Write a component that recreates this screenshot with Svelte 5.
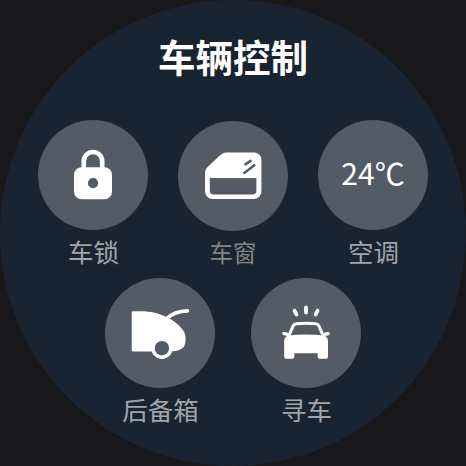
<script>
  const rows = [
    [
      { id: 'lock', label: '车锁' },
      { id: 'window', label: '车窗', dim: true },
      { id: 'climate', label: '空调', value: '24℃' }
    ],
    [
      { id: 'trunk', label: '后备箱' },
      { id: 'find', label: '寻车' }
    ]
  ];
</script>

<main class="watch">
  <section class="face">
    <h1>车辆控制</h1>
    {#each rows as row, i}
      <div class="row" class:lower={i === 1}>
        {#each row as item}
          <div class="control" class:dim={item.dim}>
            <div class="disc">
              {#if item.value}
                <span class="value">{item.value}</span>
              {:else}
                <svg viewBox="0 0 110 110" width="110" height="110">
                  {#if item.id === 'lock'}
                    <path class="line" stroke-width="4.6" d="M45.8 50V41.2a9.2 9.2 0 0 1 18.4 0V50" />
                    <rect class="solid" x="36" y="47.3" width="38" height="32" rx="7.5" />
                    <circle class="hole" cx="55" cy="63.2" r="5.1" />
                  {:else if item.id === 'window'}
                    <path class="solid" d="M47.5 31.4H76a7.4 7.4 0 0 1 7.4 7.4V70.5a7.5 7.5 0 0 1-7.5 7.5H34.5A7.5 7.5 0 0 1 27 70.5V52q0-4 3.2-6.6L41 35.3Q44.5 31.4 48.5 31.4Z" />
                    <path class="hole" d="M31.8 57H78.4V69.5q0 4-4 4H35.800q-4 0-4-4Z" />
                    <path class="cut" stroke-width="2.5" d="M67.4 43.4L72.5 39.9M66.3 51.9L76.4 44.3" />
                  {:else if item.id === 'trunk'}
                    <path class="solid" d="M28 33.3H36C46 33.3 54 35.5 60.5 38.6C68 42 74 46.5 78.3 52.5C81 56.5 81.3 63 79.5 67.5C78 71.5 72 73.2 66 73.4H28Q26.700 73.4 26.7 72V34.6Q26.7 33.3 28 33.3Z" />
                    <circle class="solid" cx="56.9" cy="70.2" r="10.7" />
                    <circle class="hole" cx="56.9" cy="70.2" r="7.2" />
                    <path class="line" stroke-width="3.8" d="M62 40.5C67 35.5 74 33.2 82.3 32.9" />
                  {:else}
                    <path class="line" stroke-width="3.8" d="M43.6 32.8L45.5 36.5M55 29.5V34.6M66.5 32.8L64.6 36.5" />
                    <path class="line" stroke-width="3" d="M37.8 58L42 48.2Q42.9 46.1 45.2 45.8Q55 44.6 64.8 45.8Q67.1 46.1 68 48.2L72.2 58" />
                    <path class="line" stroke-width="3.4" d="M33 55.6L36.5 56.3M77 55.6L73.5 56.3" />
                    <path class="solid" d="M36.7 57.5Q55 55.4 73.3 57.5Q77 59 77 63V78.2Q77 80.8 74.4 80.8H69.4Q66.7 80.8 66.7 78.2V75.3H43.3V78.2Q43.3 80.8 40.6 80.8H35.8Q33.2 80.8 33.2 78.2V63Q33.2 59 36.7 57.5Z" />
                  {/if}
                </svg>
              {/if}
            </div>
            <span class="label">{item.label}</span>
          </div>
        {/each}
      </div>
    {/each}
  </section>
</main>

<style>
  :global(body) {
    margin: 0;
    background: #18181a;
  }
  .watch {
    width: 466px;
    height: 466px;
    background: #18181a;
    overflow: hidden;
    font-family: 'Noto Sans CJK SC', sans-serif;
  }
  .face {
    width: 466px;
    height: 466px;
    border-radius: 50%;
    background: #192432;
    display: flex;
    flex-direction: column;
    align-items: center;
    box-sizing: border-box;
    padding-top: 32px;
  }
  h1 {
    margin: 0;
    height: 48px;
    line-height: 48px;
    font-size: 37.5px;
    font-weight: 700;
    color: #fff;
  }
  .row {
    display: flex;
    gap: 30px;
    margin-top: 40px;
    height: 150px;
  }
  .row.lower {
    gap: 36px;
    margin-top: 8px;
  }
  .control {
    width: 110px;
    display: flex;
    flex-direction: column;
    align-items: center;
  }
  .disc {
    width: 110px;
    height: 110px;
    border-radius: 50%;
    background: #535b66;
    display: flex;
    align-items: center;
    justify-content: center;
  }
  .label {
    margin-top: 5px;
    padding-left: 1px;
    height: 32px;
    line-height: 32px;
    font-size: 25.5px;
    color: #a0a5ac;
    white-space: nowrap;
  }
  .dim {
    padding-top: 1px;
  }
  .dim .label {
    padding-left: 0;
    font-size: 23.5px;
    color: #858585;
  }
  .value {
    font-size: 30px;
    line-height: 40px;
    font-weight: 400;
    color: #fff;
    padding-bottom: 6px;
  }
  svg {
    display: block;
  }
  .solid {
    fill: #fff;
  }
  .hole {
    fill: #535b66;
  }
  .line,
  .cut {
    fill: none;
    stroke: #fff;
    stroke-linecap: round;
    stroke-linejoin: round;
  }
  .cut {
    stroke: #535b66;
  }
</style>
